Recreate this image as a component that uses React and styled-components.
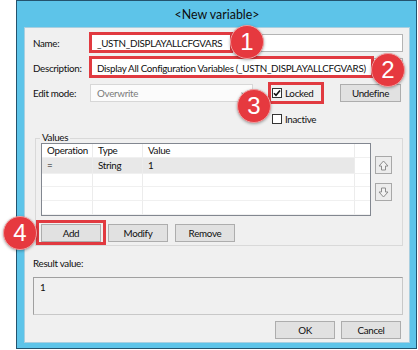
import React from "react";
import styled, { createGlobalStyle } from "styled-components";

const GlobalStyle = createGlobalStyle`
  html, body { margin: 0; padding: 0; background: #ffffff; }
  body { font-family: Lato, "Open Sans", sans-serif; }
`;

const Page = styled.div`
  position: relative;
  width: 418px;
  height: 350px;
  padding-left: 16px;
  box-sizing: border-box;
  overflow: hidden;
`;

const Window = styled.div`
  width: 401px;
  height: 349px;
  box-sizing: border-box;
  border: 1px solid #24536e;
  background: #5dc4e9;
  display: flex;
  flex-direction: column;
  padding: 0 6px 5px 7px;
`;

const TitleBar = styled.div`
  height: 25px;
  display: flex;
  align-items: center;
  justify-content: center;
  font-size: 12.4px;
  color: #0d0d0d;
  padding-top: 1px;
`;

const Client = styled.div`
  flex: 1;
  background: #f0f0f0;
  border: 1px solid #a9cfe0;
  padding: 6px 6px 0 8px;
  font-size: 9.8px;
  letter-spacing: -0.3px;
  color: #0f0f0f;
  display: flex;
  flex-direction: column;
`;

const Row = styled.div`
  display: flex;
  align-items: center;
  height: ${({ h }) => h || 18}px;
  margin-top: ${({ mt }) => mt || 0}px;
`;

const Label = styled.div`
  width: 57px;
  flex: none;
`;

const TextBox = styled.div`
  flex: 1;
  height: 100%;
  box-sizing: border-box;
  background: #fff;
  border: 1px solid #b4b4b4;
  display: flex;
  align-items: center;
  padding-left: 6px;
  white-space: nowrap;
`;

const Select = styled.div`
  position: relative;
  width: 163px;
  height: 100%;
  box-sizing: border-box;
  border: 1px solid #d7d7d7;
  background: #fbfbfb;
  color: #7a7a7a;
  display: flex;
  align-items: center;
  padding-left: 6px;
  margin-right: 19px;
`;

const Chevron = styled.span`
  position: absolute;
  right: 6px;
  top: 6px;
  width: 3px;
  height: 3px;
  border-right: 1px solid #8a8a8a;
  border-bottom: 1px solid #8a8a8a;
  transform: rotate(45deg);
`;

const CheckWrap = styled.div`
  width: ${({ w }) => w || 68}px;
  margin-left: ${({ ml }) => ml || 0}px;
  display: flex;
  align-items: center;
  gap: 3px;
`;

const Box = styled.span`
  width: 10px;
  height: 10px;
  box-sizing: border-box;
  border: 1px solid #333;
  background: #fff;
  display: flex;
  align-items: center;
  justify-content: center;
`;

const Button = styled.div`
  width: ${({ w }) => w || 60}px;
  height: 18px;
  box-sizing: border-box;
  background: #e1e1e1;
  border: 1px solid #adadad;
  display: flex;
  align-items: center;
  justify-content: center;
  flex: none;
`;

const Group = styled.div`
  position: relative;
  margin: 12px 0 0 2px;
  border: 1px solid #d9d9d9;
  padding: 4px 0 3px 5px;
`;

const GroupLabel = styled.div`
  position: absolute;
  left: 4px;
  top: -8px;
  padding: 0 2px;
  background: #f0f0f0;
`;

const ListRow = styled.div`
  display: flex;
  gap: 4px;
`;

const List = styled.div`
  width: 330px;
  height: 73px;
  box-sizing: border-box;
  border: 1px solid #828790;
  background: #fff;
  display: flex;
  flex-direction: column;
`;

const LRow = styled.div`
  display: grid;
  grid-template-columns: 51px 50px 212px 1fr;
  height: ${({ h }) => h || 14}px;
  box-sizing: border-box;
`;

const Cell = styled.div`
  border-right: 1px solid #ececec;
  border-bottom: 1px solid #f0f0f0;
  background: ${({ sel }) => (sel ? "#e8e8e8" : "transparent")};
  padding-left: 5px;
  display: flex;
  align-items: center;
  white-space: nowrap;
  &:last-child { border-right: none; }
`;

const Arrows = styled.div`
  display: flex;
  flex-direction: column;
  gap: 9px;
  padding-top: 13px;
`;

const ArrowBtn = styled.div`
  width: 17px;
  height: 18px;
  box-sizing: border-box;
  border: 1px solid #a8a8a8;
  background: #ececec;
  display: flex;
  align-items: center;
  justify-content: center;
`;

const ButtonRow = styled.div`
  display: flex;
  gap: 7px;
  margin-top: 8px;
`;

const ResultLabel = styled.div`
  margin-top: 10px;
  height: 14px;
  display: flex;
  align-items: center;
`;

const ResultBox = styled.div`
  margin-top: 7px;
  height: 38px;
  box-sizing: border-box;
  border: 1px solid #a0a0a0;
  border-right-color: #c8c8c8;
  border-bottom-color: #c8c8c8;
  padding: 3px 6px;
`;

const Footer = styled.div`
  display: flex;
  justify-content: flex-end;
  gap: 6px;
  margin-top: 6px;
  padding-right: 2px;
`;

const Mark = styled.div`
  position: absolute;
  border: 3px solid #e13a40;
  box-sizing: border-box;
  pointer-events: none;
`;

const Badge = styled.div`
  position: absolute;
  width: 34px;
  height: 34px;
  border-radius: 50%;
  background: #e6393f;
  border: 1px solid #f29b9d;
  box-sizing: border-box;
  box-shadow: 0 1px 3px rgba(0, 0, 0, 0.35);
  color: #fff;
  font-family: "Liberation Sans", Arial, sans-serif;
  font-size: 24px;
  display: flex;
  align-items: center;
  justify-content: center;
`;

const Check = () => (
  <svg width="8" height="8" viewBox="0 0 8 8">
    <path d="M1 4.2 L3 6.3 L7 1.5" fill="none" stroke="#111" strokeWidth="1.6" />
  </svg>
);

const ArrowIcon = ({ down }) => (
  <svg width="11" height="11" viewBox="0 0 11 11" style={down ? { transform: "rotate(180deg)" } : null}>
    <path d="M5.5 1 L10 6 L7.5 6 L7.5 10 L3.5 10 L3.5 6 L1 6 Z" fill="#f2f2f2" stroke="#8c8c8c" strokeWidth="1" />
  </svg>
);

const marks = [
  { left: 89, top: 32, width: 144, height: 21 },
  { left: 89, top: 56, width: 285, height: 22 },
  { left: 268, top: 82, width: 56, height: 22 },
  { left: 36, top: 220, width: 70, height: 25 },
];

const badges = [
  { n: 1, x: 247, y: 42 },
  { n: 2, x: 388, y: 70 },
  { n: 3, x: 254, y: 106 },
  { n: 4, x: 20, y: 233 },
];

const rows = [
  ["Operation", "Type", "Value"],
  ["=", "String", "1"],
  ["", "", ""],
  ["", "", ""],
  ["", "", ""],
];

export default function App() {
  return (
    <Page>
      <GlobalStyle />
      <Window>
        <TitleBar>&lt;New variable&gt;</TitleBar>
        <Client>
          <Row>
            <Label>Name:</Label>
            <TextBox>_USTN_DISPLAYALLCFGVARS</TextBox>
          </Row>
          <Row mt={6} h={19}>
            <Label>Description:</Label>
            <TextBox>Display All Configuration Variables (_USTN_DISPLAYALLCFGVARS)</TextBox>
          </Row>
          <Row mt={7}>
            <Label>Edit mode:</Label>
            <Select>
              Overwrite
              <Chevron />
            </Select>
            <CheckWrap>
              <Box><Check /></Box>
              Locked
            </CheckWrap>
            <Button w={61}>Undefine</Button>
          </Row>
          <Row mt={10} h={14}>
            <CheckWrap ml={239}>
              <Box />
              Inactive
            </CheckWrap>
          </Row>
          <Group>
            <GroupLabel>Values</GroupLabel>
            <ListRow>
              <List>
                {rows.map((r, i) => (
                  <LRow key={i} h={i === 1 ? 16 : 14}>
                    {r.map((c, j) => (
                      <Cell key={j} sel={i === 1}>{c}</Cell>
                    ))}
                    <Cell />
                  </LRow>
                ))}
              </List>
              <Arrows>
                <ArrowBtn><ArrowIcon /></ArrowBtn>
                <ArrowBtn><ArrowIcon down /></ArrowBtn>
              </Arrows>
            </ListRow>
            <ButtonRow>
              <Button>Add</Button>
              <Button>Modify</Button>
              <Button>Remove</Button>
            </ButtonRow>
          </Group>
          <ResultLabel>Result value:</ResultLabel>
          <ResultBox>1</ResultBox>
          <Footer>
            <Button>OK</Button>
            <Button>Cancel</Button>
          </Footer>
        </Client>
      </Window>
      {marks.map((m, i) => (
        <Mark key={i} style={m} />
      ))}
      {badges.map((b) => (
        <Badge key={b.n} style={{ left: b.x - 17, top: b.y - 17 }}>{b.n}</Badge>
      ))}
    </Page>
  );
}
